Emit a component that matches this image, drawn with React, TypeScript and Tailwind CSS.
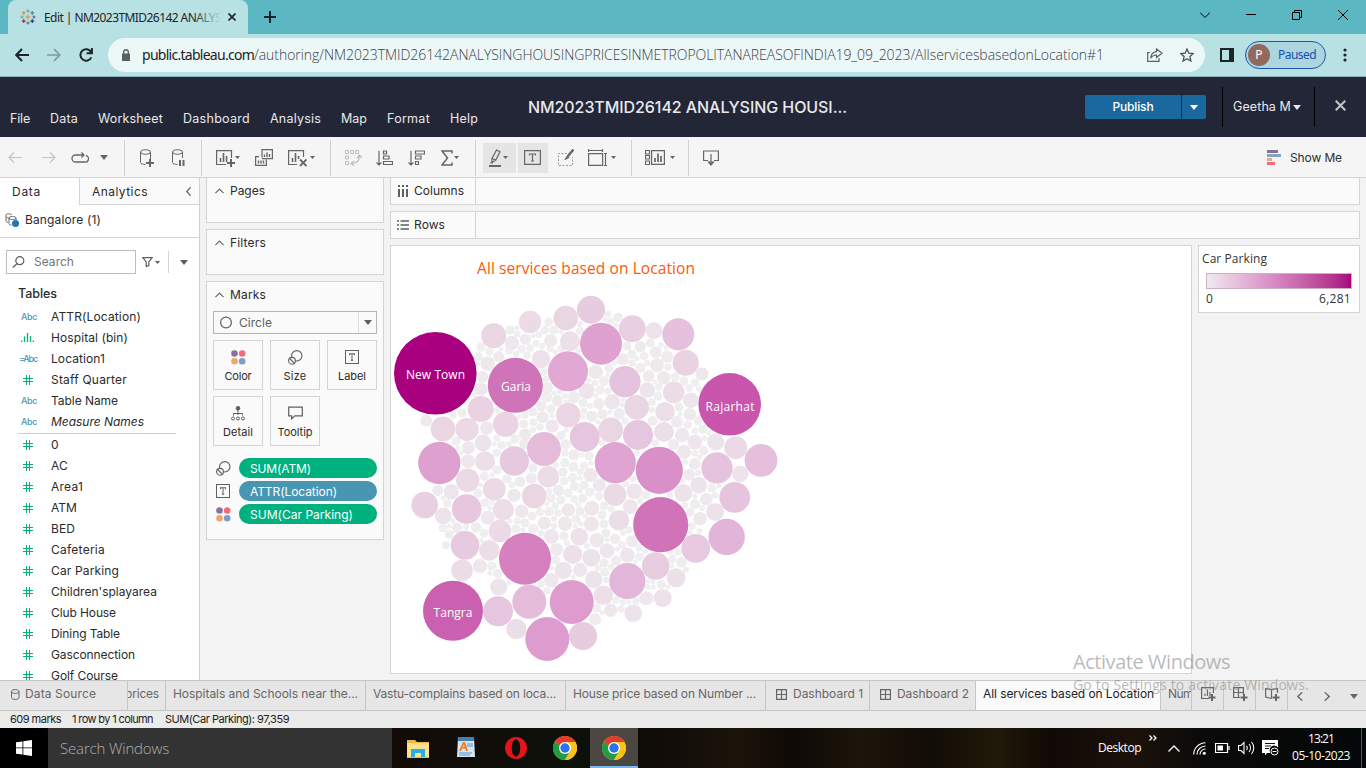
import { useLayoutEffect, useRef, useState } from "react";
import type { ReactNode } from "react";

/* Text whose letter spacing is adjusted so that it spans the given width. */
function Fit({ w, children, className = "" }: { w: number; children: string; className?: string }) {
  const ref = useRef<HTMLSpanElement>(null);
  const [spacing, setSpacing] = useState(0);
  useLayoutEffect(() => {
    if (!ref.current) return;
    const natural = ref.current.getBoundingClientRect().width;
    setSpacing((w - natural) / children.length);
  }, [w, children]);
  return (
    <span ref={ref} className={`inline-block shrink-0 whitespace-pre ${className}`} style={{ letterSpacing: `${spacing}px` }}>
      {children}
    </span>
  );
}

function Icon({ w, h, className = "", sw = 1, children }: { w: number; h: number; className?: string; sw?: number; children: ReactNode }) {
  return (
    <svg width={w} height={h} viewBox={`0 0 ${w} ${h}`} fill="none" stroke="currentColor" strokeWidth={sw} className={`block shrink-0 ${className}`}>
      {children}
    </svg>
  );
}

function Caret({ className = "", big = false }: { className?: string; big?: boolean }) {
  return big ? (
    <Icon w={8} h={5} className={className}><path d="M0 0h8L4 5z" fill="currentColor" stroke="none" /></Icon>
  ) : (
    <Icon w={5} h={3} className={className}><path d="M0 0h5L2.5 3z" fill="currentColor" stroke="none" /></Icon>
  );
}

/* ---------- browser ---------- */

function TableauLogo() {
  const marks: [number, number, number, string][] = [
    [8, 8, 2.6, "#eb8a3c"], [8, 2, 1.6, "#6f9ba8"], [8, 14, 1.6, "#5c6f9e"], [2, 8, 1.5, "#6f9ba8"], [14, 8, 1.5, "#4a5e9a"],
    [3.7, 3.9, 2, "#e8912d"], [12.3, 3.9, 2, "#5b879b"], [3.7, 12.1, 2, "#c72035"], [12.3, 12.1, 2, "#1f457e"],
  ];
  return (
    <Icon w={16} h={16} sw={1.2}>
      {marks.map(([x, y, r, c], i) => <path key={i} stroke={c} d={`M${x - r} ${y}h${2 * r}M${x} ${y - r}v${2 * r}`} />)}
    </Icon>
  );
}

function Browser() {
  return (
    <div className="h-[77px] bg-[#5bb7c1] font-['Noto_Sans',sans-serif] text-[#1d2327]">
      <div className="flex h-[34px] items-stretch">
        <div className="ml-2 flex w-[240px] items-center rounded-t-[8px] bg-[#b8e1e4] pl-3">
          <TableauLogo />
          <div className="relative ml-2 w-[177px] overflow-hidden pb-[2px]">
            <Fit w={177} className="text-[12px]">Edit | NM2023TMID26142 ANALYS</Fit>
            <div className="absolute inset-y-0 right-0 w-7 bg-gradient-to-r from-transparent to-[#b8e1e4]" />
          </div>
          <Icon w={8} h={8} sw={1.6} className="ml-[7px]"><path d="M.5.5l7 7M7.5.5l-7 7" /></Icon>
        </div>
        <Icon w={12} h={12} sw={2} className="ml-4 self-center"><path d="M6 0v12M0 6h12" /></Icon>
        <div className="ml-auto flex items-center pb-[5px] text-black">
          <Icon w={10} h={6} className="mr-9"><path d="M0 .5l5 5 5-5" /></Icon>
          <Icon w={10} h={1} className="mr-9"><path d="M0 .5h10" /></Icon>
          <Icon w={10} h={10} className="mr-9"><path d="M.5 2.5h7v7h-7zM2.5 2.5v-2h7v7h-2" /></Icon>
          <Icon w={10} h={10} className="mr-[18px]"><path d="M0 0l10 10M10 0L0 10" /></Icon>
        </div>
      </div>
      <div className="flex h-[43px] items-center border-b border-[#8fb8bd] bg-[#b8e1e4] pb-[1px]">
        <Icon w={14} h={14} sw={2} className="ml-[15px]"><path d="M14 7H1.5M7 1L1.200 7 7 13" /></Icon>
        <Icon w={14} h={14} sw={1.700} className="ml-[18px] text-[#7d9a9e]"><path d="M0 7h12.500M7 1l5.800 6L7 13" /></Icon>
        <Icon w={14} h={14} sw={2} className="ml-[18px]"><path d="M12.300 9.300A5.700 5.700 0 1 1 12 4M12.900 0v5.300H7.600" /></Icon>
        <div className="ml-[15px] flex h-[34px] w-[1097px] items-center rounded-full bg-[#ecf8f8]">
          <Icon w={8} h={12} sw={1.400} className="ml-[14px] text-[#5a5f63]"><path d="M0 4.500h8V12H0z" fill="currentColor" stroke="none" /><path d="M1.700 5V3a2.300 2.300 0 0 1 4.600 0v2" /></Icon>
          <Fit w={112} className="ml-[12px] text-[14px]">public.tableau.com</Fit>
          <Fit w={850} className="font-['Open_Sans',sans-serif] text-[14px] font-light text-[#3c4246]">/authoring/NM2023TMID26142ANALYSINGHOUSINGPRICESINMETROPOLITANAREASOFINDIA19_09_2023/AllservicesbasedonLocation#1</Fit>
          <Icon w={16} h={14} sw={1.200} className="ml-[43px] text-[#5a5f63]"><path d="M3 4.500H.700V13.300H12V10M9.500 1l5.500 4.300-5.500 4.200V7C6.500 7 5 8 3.600 10.300 4 6.500 6 4 9.500 3.700z" /></Icon>
          <Icon w={14} h={14} sw={1.300} className="ml-[17px] text-[#4a5054]"><path d="M7 1l1.800 4.200 4.500.4-3.400 3 1 4.400L7 10.700 3.100 13l1-4.400-3.400-3 4.500-.4z" /></Icon>
        </div>
        <Icon w={14} h={14} className="ml-[15px]"><path d="M0 0h14v14H0zM2 2v10h7V2z" fill="currentColor" fillRule="evenodd" stroke="none" /></Icon>
        <div className="ml-[11px] flex h-7 w-[81px] items-center rounded-full border border-[#1f55ad] bg-[#abd6e0] pl-[2px] text-[#1650ab]">
          <span className="flex h-[22px] w-[22px] items-center justify-center rounded-full bg-[#91695d] text-[12px] text-white">P</span>
          <Fit w={38} className="ml-2 text-[12px]">Paused</Fit>
        </div>
        <Icon w={4} h={14} className="ml-[17px]"><g fill="currentColor" stroke="none"><circle cx="2" cy="2" r="1.600" /><circle cx="2" cy="7" r="1.600" /><circle cx="2" cy="12" r="1.600" /></g></Icon>
      </div>
    </div>
  );
}

/* ---------- application header ---------- */

function Header() {
  return (
    <div className="flex h-[60px] bg-[#232636] text-[#e9e9ec]">
      <div className="flex w-[528px] items-start pl-[10px] pt-[33px] text-[12.5px] leading-[18px]">
        <Fit w={20}>File</Fit>
        <Fit w={28} className="ml-5">Data</Fit>
        <Fit w={65} className="ml-5">Worksheet</Fit>
        <Fit w={67} className="ml-5">Dashboard</Fit>
        <Fit w={51} className="ml-5">Analysis</Fit>
        <Fit w={26} className="ml-5">Map</Fit>
        <Fit w={43} className="ml-5">Format</Fit>
        <Fit w={28} className="ml-5">Help</Fit>
      </div>
      <Fit w={319} className="pt-[19px] text-[16px] font-medium leading-[22px]">NM2023TMID26142 ANALYSING HOUSI...</Fit>
      <div className="ml-auto flex">
        <div className="mt-[18px] flex h-6 text-white">
          <div className="flex w-24 items-center justify-center rounded-l-[2px] bg-[#1a699e] text-[12px] font-medium"><Fit w={41}>Publish</Fit></div>
          <div className="ml-px flex w-6 items-center justify-center rounded-r-[2px] bg-[#1a699e]"><Caret big /></div>
        </div>
        <div className="ml-4 mt-[10px] flex h-10 w-[93px] items-center border-x border-black pl-[10px] text-[12.5px]">
          <Fit w={58} className="pt-px">Geetha M</Fit>
          <Caret big className="ml-[2px]" />
        </div>
        <Icon w={11} h={11} sw={2} className="ml-5 mr-5 mt-[23px] text-[#c3c4c9]"><path d="M.7.7l9.600 9.600M10.300.7L.7 10.300" /></Icon>
      </div>
    </div>
  );
}

/* ---------- toolbar ---------- */

function Sep({ className }: { className: string }) {
  return <div className={`h-9 w-px shrink-0 bg-[#d0d0d0] ${className}`} />;
}

function LabelIcon({ w = 17, h = 15, className = "" }: { w?: number; h?: number; className?: string }) {
  return (
    <svg width={w} height={h} viewBox="0 0 17 15" preserveAspectRatio="none" fill="none" stroke="currentColor" className={`block shrink-0 ${className}`}>
      <path d="M.6.6h15.800v13.800H.6zM5.500 5.500V4h6v1.500M8.500 4v7M7 11h3" strokeWidth="1.200" />
    </svg>
  );
}

function Toolbar() {
  return (
    <div className="flex h-[41px] items-center border-b border-[#d4d4d4] bg-[#f5f5f5] pt-px text-[#666]">
      <Icon w={14} h={11} sw={1.200} className="ml-2 text-[#c2c2c2]"><path d="M14 5.500H1M6 .5l-5 5 5 5" /></Icon>
      <Icon w={14} h={11} sw={1.200} className="ml-[20px] text-[#c2c2c2]"><path d="M0 5.500h13M8 .5l5 5-5 5" /></Icon>
      <Icon w={18} h={12} sw={1.300} className="ml-[15px]"><path d="M13 3H4.500a3.300 3.300 0 0 0 0 7h9a3.300 3.300 0 0 0 1.500-6.500M10.500.5L13 3l-2.500 2.500" /></Icon>
      <Caret big className="ml-[11px]" />
      <Sep className="ml-4" />
      <Icon w={14} h={18} className="ml-[15px]"><path d="M.5 3v10.500c0 1.300 3 2 5 2M10.500 3v7M.5 3C.5 0 10.500 0 10.500 3S.5 6 .5 3" /><path d="M10 10v8M6 14h8" strokeWidth="2" /></Icon>
      <Icon w={14} h={18} className="ml-[18px]"><path d="M.5 3v10.500c0 1.300 3 2 5 2M10.500 3v6M.5 3C.5 0 10.500 0 10.500 3S.5 6 .5 3" /><path d="M8 11v6M11.500 11v6" strokeWidth="2" /></Icon>
      <Sep className="ml-[15px]" />
      <Icon w={19} h={18} className="ml-[14px]"><path d="M10 15.500H.6V1.600h14.900V9" strokeWidth="1.200" /><path d="M4.500 9v4M7.500 4v9M10.500 7v6" strokeWidth="1.600" /><path d="M15 10v8M11 14h8" strokeWidth="2" /></Icon>
      <Caret className="ml-0" />
      <Icon w={18} h={17} className="ml-[15px]"><path d="M7 8.500V.6h10.400v9H14M4 7.600H.6v8.800h10.800V10.500M7 9.600h7" strokeWidth="1.200" /><path d="M9.500 8V5.500M12 8V3.500M14.500 8V5M3.500 14.500v-3M6 14.500v-3M8.500 14.500v-3" strokeWidth="1.400" /></Icon>
      <Icon w={19} h={18} className="ml-[15px]"><path d="M9 15.500H.6V1.600h14.900V8" strokeWidth="1.200" /><path d="M4.500 9v4M7.500 4v9M10.500 7v3" strokeWidth="1.600" /><path d="M12 10.500l6.500 6.500M18.500 10.500L12 17" strokeWidth="1.800" /></Icon>
      <Caret className="ml-[3px]" />
      <Sep className="ml-[15px]" />
      <Icon w={17} h={17} className="ml-[14px] text-[#bdbdbd]"><path d="M.5 1.500h3v3h-3zM5.500 1.500h3v3h-3zM10.500 1.500h3v3h-3zM.5 7h3v3h-3zM.5 12.500h3v3h-3z" /><path d="M6.500 14.500c5 0 8-2.500 8-8M12 9l2.500-3L17 9M9 12l-3 2.500L9 17" strokeWidth="1.200" /></Icon>
      <Icon w={17} h={16} className="ml-[14px]"><path d="M3 1v14M.5 12.500L3 15l2.500-2.500M7.500 1h3v3h-3zM7.500 6h5.500v3H7.500zM7.500 11.500h9v3h-9z" strokeWidth="1.200" /></Icon>
      <Icon w={17} h={16} className="ml-[15px]"><path d="M3 1v14M.5 12.500L3 15l2.500-2.500M7.500 1h9v3h-9zM7.500 6h5.500v3H7.500zM7.500 11.500h3v3h-3z" strokeWidth="1.200" /></Icon>
      <Icon w={12} h={16} sw={1.500} className="ml-4"><path d="M11 3.500V1H1l5.500 7L1 15h10v-2.500" /></Icon>
      <Caret className="ml-[1px]" />
      <Sep className="ml-4" />
      <div className="ml-[7px] flex h-[30px] w-[33px] shrink-0 items-center bg-[#e5e5e5] pl-[6px]">
        <Icon w={13} h={18}><path d="M3 9.500L7.500 1l3.500 1.800L6.800 11 3 13.500zM3 9.500L6.800 11M1 14h3" strokeWidth="1.200" /><path d="M0 17h12" strokeWidth="2" /></Icon>
        <Caret className="ml-[1px]" />
      </div>
      <div className="ml-[2px] flex h-[30px] w-[30px] shrink-0 items-center bg-[#e5e5e5] pl-[6px]"><LabelIcon /></div>
      <Icon w={16} h={17} className="ml-[10px]"><path d="M9 4.500H.5v12h14V8" strokeDasharray="2 1.500" stroke="#9a9a9a" /><path d="M15.500.5L10 7" strokeWidth="2.500" /><path d="M9.500 6.500L7 10.500l4-2z" fill="currentColor" /></Icon>
      <Icon w={19} h={17} className="ml-[14px]"><path d="M.6 4.600h14v11.800H.6zM.5 1.500h14M.5 0v3M14.500 0v3M17.500 4.500v12M16 4.500h3M16 16.500h3" strokeWidth="1.200" /></Icon>
      <Caret className="ml-1" />
      <Sep className="ml-[15px]" />
      <Icon w={20} h={15} className="ml-[13px]"><path d="M.5.5h4v3.500h-4zM.5 5.500h4v3.500h-4zM.5 11h4v3.500h-4zM6.600.6h12.800v13.800H6.600z" strokeWidth="1.200" /><path d="M10 12V8M13 12V3.500M16 12V6" strokeWidth="1.700" /></Icon>
      <Caret className="ml-[5px]" />
      <Sep className="ml-[13px]" />
      <Icon w={16} h={16} className="ml-[14px]"><path d="M5 10.500H.6V1h14.800v9.500H11M8 4v10M5.500 12L8 15l2.500-3z" strokeWidth="1.200" /></Icon>
      <div className="ml-auto mr-6 flex items-center text-[12px] text-[#2d2d2d]">
        <Icon w={14} h={15}><g stroke="none"><path d="M0 0h11v3H0z" fill="#89719b" /><path d="M0 4h14v3H0z" fill="#7fa4cd" /><path d="M0 8h5v3H0z" fill="#f5a480" /><path d="M0 12h8v3H0z" fill="#f7697c" /></g></Icon>
        <Fit w={52} className="ml-[9px]">Show Me</Fit>
      </div>
    </div>
  );
}

/* ---------- data pane ---------- */

type Kind = "abc" | "eqabc" | "num" | "bin";
const dimensions: [Kind, string, number][] = [
  ["abc", "ATTR(Location)", 90], ["bin", "Hospital (bin)", 77], ["eqabc", "Location1", 54], ["num", "Staff Quarter", 76], ["abc", "Table Name", 67], ["abc", "Measure Names", 93],
];
const measures: [Kind, string, number][] = [
  ["num", "0", 8], ["num", "AC", 17], ["num", "Area1", 32], ["num", "ATM", 26], ["num", "BED", 24], ["num", "Cafeteria", 54], ["num", "Car Parking", 68],
  ["num", "Children'splayarea", 106], ["num", "Club House", 65], ["num", "Dining Table", 69], ["num", "Gasconnection", 84], ["num", "Golf Course", 67],
];

function Field({ kind, name, w }: { kind: Kind; name: string; w: number }) {
  return (
    <div className="flex h-[21px] shrink-0 items-center">
      <div className="flex w-[51px] items-center pl-[19px]">
        {kind === "abc" && <Fit w={16} className="ml-[2px] text-[9px] font-medium text-[#4996b2]">Abc</Fit>}
        {kind === "eqabc" && <Fit w={18} className="text-[9px] font-medium text-[#4996b2]">=Abc</Fit>}
        {kind === "bin" && <Icon w={13} h={9} sw={1.300} className="ml-[2px] text-[#00b180]"><path d="M.7 9V7.500M3.500 9V3.500M6.500 9V0M9.500 9V3M12.300 9V7.500" /></Icon>}
        {kind === "num" && <Icon w={10} h={10} sw={1} className="ml-1 text-[#00b180]"><path d="M3.500 0v10M6.500 0v10M0 3.500h10M0 6.500h10" /></Icon>}
      </div>
      <Fit w={w} className={name === "Measure Names" ? "italic" : ""}>{name}</Fit>
    </div>
  );
}

function DataPane() {
  return (
    <div className="flex w-[200px] shrink-0 flex-col overflow-hidden border-r border-[#d0d0d0] bg-white text-[12px] text-[#2b2b2b]">
      <div className="flex h-[27px] shrink-0">
        <div className="flex w-[79px] items-center pl-3"><Fit w={29}>Data</Fit></div>
        <div className="flex flex-1 items-center border-b border-l border-[#d4d4d4] bg-[#fafafa] pl-3">
          <Fit w={56} className="pt-px">Analytics</Fit>
          <Icon w={5} h={9} sw={1.200} className="ml-auto mr-2 text-[#5f5f5f]"><path d="M4.500.3L.8 4.500l3.700 4.200" /></Icon>
        </div>
      </div>
      <div className="flex h-[33px] shrink-0 items-center border-b border-[#d4d4d4] pb-[2px] pl-[5px]">
        <Icon w={14} h={14} className="text-[#666]"><path d="M1 8V2c0-1.500 5-1.500 6 0M1 8c0 .8 1 1.200 2 1.400M1.500 4c1 1 2 1 2.500 1M4 5c0-2 7-2 7 0s-7 2-7 0M4 5v5.500c0 .8 1 1.500 2.500 1.600M11 5v3" /><circle cx="10.500" cy="10.500" r="3.500" fill="#1f77b4" stroke="none" /></Icon>
        <Fit w={76} className="ml-[6px]">Bangalore (1)</Fit>
      </div>
      <div className="mt-3 flex h-6 shrink-0 items-center pl-[6px] text-[#5f5f5f]">
        <div className="flex h-6 w-[130px] items-center border border-[#bdbdbd] pl-[5px]">
          <Icon w={13} h={12} sw={1.200}><circle cx="7.800" cy="4.700" r="4" /><path d="M5 7.700L.7 11.500" /></Icon>
          <Fit w={40} className="ml-[9px] text-[#757575]">Search</Fit>
        </div>
        <Icon w={11} h={10} sw={1.200} className="ml-[6px]"><path d="M.8.6h9.400L6.800 5v3.500l-2.600 1V5z" /></Icon>
        <Caret className="ml-[2px]" />
        <div className="ml-[8px] h-[22px] w-px bg-[#d4d4d4]" />
        <Caret big className="ml-[11px]" />
      </div>
      <div className="flex h-[32px] shrink-0 items-end pb-[3px] pl-[18px]"><Fit w={39} className="text-[12.5px] font-medium leading-[18px]">Tables</Fit></div>
      {dimensions.map(([k, n, w]) => <Field key={n} kind={k} name={n} w={w} />)}
      <div className="ml-[18px] mt-px h-px w-[158px] shrink-0 bg-[#d0d0d0]" />
      {measures.map(([k, n, w]) => <Field key={n} kind={k} name={n} w={w} />)}
    </div>
  );
}

/* ---------- cards ---------- */

function CardTitle({ w, children }: { w: number; children: string }) {
  return (
    <div className="flex h-[25px] items-center pl-[8px]">
      <Icon w={9} h={6} sw={1.200} className="text-[#6a6a6a]"><path d="M.4 5.200L4.500 1l4.100 4.200" /></Icon>
      <Fit w={w} className="ml-[6px]">{children}</Fit>
    </div>
  );
}

function ColorDots() {
  return (
    <Icon w={15} h={15}><g stroke="none"><circle cx="3.500" cy="3.500" r="3.300" fill="#89719b" /><circle cx="11.200" cy="3.500" r="3.300" fill="#f7697c" /><circle cx="3.500" cy="11.200" r="3.300" fill="#f5a26f" /><circle cx="11.200" cy="11.200" r="3.300" fill="#7a9fca" /></g></Icon>
  );
}
function SizeIcon() {
  return <Icon w={15} h={15} sw={1.100}><circle cx="8.800" cy="5.800" r="5.200" /><circle cx="4" cy="10.800" r="3.400" fill="#fafafa" /><path d="M1.700 8.500l4.600 4.600" /></Icon>;
}

function MarkButton({ label, w, children }: { label: string; w: number; children: ReactNode }) {
  return (
    <div className="flex h-[50px] w-[50px] flex-col items-center border border-[#d4d4d4] bg-[#fafafa] pt-[8px] text-[11px]">
      <div className="flex h-4 items-center text-[#5f5f5f]">{children}</div>
      <Fit w={w} className="mt-[3px] leading-4">{label}</Fit>
    </div>
  );
}

function Pill({ w, children, icon, dimension = false }: { w: number; children: string; icon: ReactNode; dimension?: boolean }) {
  return (
    <div className="flex h-[20px] items-center">
      <div className="-ml-px w-[23px] text-[#5f5f5f]">{icon}</div>
      <div className={`flex h-[20px] w-[138px] items-center rounded-full pl-[11px] pt-px text-white ${dimension ? "bg-[#4996b2]" : "bg-[#00b180]"}`}><Fit w={w}>{children}</Fit></div>
    </div>
  );
}

function Cards() {
  return (
    <div className="ml-[6px] flex w-[178px] shrink-0 flex-col gap-[6px] text-[12px] text-[#2b2b2b]">
      <div className="-mt-px h-[46px] border border-[#d4d4d4] bg-[#fafafa]"><CardTitle w={35}>Pages</CardTitle></div>
      <div className="h-[46px] border border-[#d4d4d4] bg-[#fafafa]"><CardTitle w={36}>Filters</CardTitle></div>
      <div className="h-[259px] border border-[#d4d4d4] bg-[#fafafa]">
        <CardTitle w={36}>Marks</CardTitle>
        <div className="ml-[6px] mt-[4px] flex h-[23px] w-[164px] items-center border border-[#b5b5b5] pl-[6px] text-[#5f5f5f]">
          <Icon w={13} h={13} sw={1.200}><circle cx="6" cy="6.500" r="5.400" /></Icon>
          <Fit w={33} className="ml-[6px]">Circle</Fit>
          <div className="ml-auto flex h-full w-[18px] items-center justify-center border-l border-[#dcdcdc]"><Caret big /></div>
        </div>
        <div className="ml-[6px] mt-[6px] grid w-[164px] grid-cols-3 gap-x-[7px] gap-y-[6px]">
          <MarkButton label="Color" w={27}><ColorDots /></MarkButton>
          <MarkButton label="Size" w={23}><SizeIcon /></MarkButton>
          <MarkButton label="Label" w={28}><LabelIcon w={14} h={14} /></MarkButton>
          <MarkButton label="Detail" w={30}>
            <Icon w={14} h={15}><circle cx="7" cy="2.200" r="2.200" fill="currentColor" stroke="none" /><path d="M7 3v6M2.500 9.500V7.500h9v2" /><circle cx="2" cy="12.500" r="1.500" /><circle cx="7" cy="12.500" r="1.500" /><circle cx="12" cy="12.500" r="1.500" /></Icon>
          </MarkButton>
          <MarkButton label="Tooltip" w={35}>
            <Icon w={15} h={14} sw={1.200}><path d="M.7 1.200h13.600v8.600H6.800L3.600 12.800V9.800H.7z" /></Icon>
          </MarkButton>
        </div>
        <div className="ml-[10px] mt-3 flex flex-col gap-[3px]">
          <Pill w={61} icon={<SizeIcon />}>SUM(ATM)</Pill>
          <Pill w={87} dimension icon={<LabelIcon w={14} h={14} />}>ATTR(Location)</Pill>
          <Pill w={103} icon={<ColorDots />}>SUM(Car Parking)</Pill>
        </div>
      </div>
    </div>
  );
}

/* ---------- bubble chart ---------- */

type Bubble = [number, number, number];
const bubbles: Bubble[] = [
  [435.3, 373.3, 41.3], [515.3, 385.3, 27.5], [493.7, 335.7, 12.5], [530, 322, 11.2], [565.7, 318, 12.3], [591, 309.7, 14], [568, 371.3, 20], [601, 343.7, 21],
  [570, 341.3, 10], [550.7, 340.7, 6.5], [541, 359, 9.2], [525.3, 339.3, 5.6], [512, 343, 7.2], [548.7, 322, 4.4], [487.7, 363.7, 7.3], [498.7, 356.7, 5.6],
  [489.3, 351.7, 4.2], [478.3, 356.7, 4.6], [482.3, 376.7, 6], [481, 389, 6.6], [480.7, 409, 13], [505.7, 424.3, 12.7], [443, 429, 12.4], [467, 429.3, 11.6],
  [426.3, 420.7, 6], [486.7, 428, 6.7], [483, 443, 8.4], [468.3, 447.7, 6.6], [544, 449, 17], [568.3, 415, 12.3], [584.7, 437, 15], [439.3, 463, 21.2],
  [574, 397, 6], [586.7, 391, 8], [547.3, 387.7, 5.6], [546.7, 397, 5.5], [557.3, 400.7, 5.6], [541.3, 406, 5.2], [542.7, 417.3, 6], [552.3, 426, 6.6],
  [523.7, 424, 4.6], [525, 434.7, 6.2], [565.7, 444.3, 5], [574, 455, 5.5], [517.3, 334, 3.5], [521.7, 349, 4.3], [509, 350.3, 4.2], [536, 343.3, 3.4],
  [538.7, 334.7, 3.4], [580, 331, 4], [561.3, 348.7, 4], [550, 349, 3.3], [561, 435.3, 4.6], [524.3, 444, 5.2], [501.7, 445, 4.3], [496.7, 438.3, 3.6],
  [496.7, 452.7, 4.3], [533.3, 422.3, 4], [560, 391.3, 3.4], [566.7, 402.7, 3.2], [632.3, 328.7, 13.5], [678.3, 334.3, 16], [654, 330.7, 8.4], [685.7, 362.7, 13],
  [702, 374, 6.6], [729.7, 404.3, 31.3], [618, 317.3, 4.6], [610.7, 321, 3.4], [640.3, 346.7, 5.6], [650.3, 343, 4.6], [661, 345, 2.8], [655.7, 352.3, 6],
  [667, 356.7, 6], [657, 365.3, 7], [622.7, 359.3, 6], [625, 381.7, 15.6], [640.3, 367.7, 5], [595.7, 372, 7.2], [603.7, 381.3, 5], [648.7, 376, 6],
  [663.7, 377.7, 6.7], [673.7, 392.3, 10.8], [647.3, 390, 7.8], [695, 382.7, 4.3], [690.7, 400.3, 7.8], [636.7, 407.3, 12.4], [665, 411.7, 9.8], [612.3, 401.7, 7.7],
  [599, 403.7, 5.7], [619.3, 413.7, 5.6], [602.3, 414.3, 5.2], [610.7, 430, 12.4], [638, 435, 15], [652.7, 421, 5], [664, 432, 10], [689.7, 414.3, 6.2],
  [677, 422, 6], [687.7, 424.7, 4.3], [682, 435, 7.2], [694.7, 442, 7.4], [673.7, 444.3, 5.6], [684, 452, 7], [703.7, 450.7, 4.7], [704.7, 438.3, 3],
  [695, 430.7, 3.3], [715.7, 442, 8.5], [735.7, 447.7, 11.5], [761, 460.3, 16.4], [591.7, 416.3, 5.6],
  [514.3, 461, 14.7], [485, 461.3, 10], [468, 461.3, 7], [467.7, 480.3, 11.7], [437.7, 490.3, 5.6], [451.3, 491.7, 7.7], [424.7, 505, 13.3], [466.7, 509, 14.8],
  [443.3, 516, 8.4], [494.3, 489.3, 11.4], [514, 495.3, 6.8], [534.3, 496, 12.3], [548.3, 476.7, 10.8], [531.3, 478.3, 5.6], [520, 481.7, 5.4], [484.3, 476.3, 4.7],
  [503.3, 509.7, 10.6], [521.7, 511.3, 6.8], [487.7, 517.7, 7], [500, 531, 11.2], [465, 545.3, 14.3], [457, 527.7, 5.2], [476, 527.3, 5.2], [449.3, 534.3, 4.6],
  [442.7, 528.3, 4], [446, 545, 4], [447.3, 503.3, 4.4], [485, 502.7, 4.5], [489.3, 550.3, 10.4], [480, 566, 7.2], [491.7, 566, 4.6], [497.7, 573.7, 4.7],
  [462, 570.3, 10.8], [525, 558.7, 26], [498.7, 587, 8.6], [453, 610.7, 30], [498, 611.3, 15], [529.3, 601.7, 17], [516.3, 629, 10.2], [547.3, 639, 22],
  [571.7, 602, 22], [583, 636, 14], [551.3, 580.3, 7.2], [563.3, 570.3, 8.6], [580, 570, 7.2], [572.7, 554.3, 9.6], [591.3, 557.7, 9], [556.7, 549.3, 6.4],
  [555.7, 560, 4.7], [551.3, 536.3, 7.4], [533.3, 528.7, 5], [544.3, 523, 6.6], [565, 523.7, 7.2], [579.3, 536.7, 9], [549, 511.7, 4.6], [568.3, 510, 6.8],
  [558.3, 490.3, 5.6], [551, 498.3, 4.5], [591.7, 508.3, 7.5], [591.3, 524, 7.6], [573.3, 467, 5], [564.7, 462.7, 4.6], [572.7, 477.7, 4.6], [574.3, 486.3, 4.6],
  [582.7, 498.3, 4.6], [584.3, 465.7, 4.3], [590.3, 475, 7], [517.3, 521, 3.4],
  [615.3, 462.7, 20.6], [659.3, 470.3, 23.6], [660.7, 524.7, 27.6], [717, 468, 15.7], [740.3, 474, 8.2], [734.7, 497.3, 15.4], [726.7, 537, 18.2], [695.7, 548.3, 14.4],
  [655.7, 566, 13.8], [627.3, 581, 18.1], [676, 577.7, 9.5], [662.7, 598, 9], [646.3, 598.3, 7], [633.3, 613.3, 8.8], [610.7, 610.3, 6.7], [595, 619.3, 6],
  [603.3, 595.3, 9.8], [593.7, 579.3, 8.7], [596.7, 540.3, 7.2], [607, 550.7, 7.4], [615, 494.7, 11.3], [634.3, 491.3, 7.8], [630.3, 506.7, 7.4], [619, 520.3, 10.3],
  [599.3, 485, 6.6], [683.3, 493, 9], [698.7, 485.3, 8.4], [689, 474.7, 6], [694.7, 464, 6], [706.3, 499.3, 6.3], [715, 512, 9], [700, 518.7, 6.7],
  [695, 504, 5], [690, 512.3, 4.6], [681.7, 562.3, 5.4], [672.3, 559, 4.4], [686, 569.7, 3], [627.3, 555, 7.4], [639.3, 556.7, 4.3], [616, 560.7, 5],
  [632, 541.3, 6], [615, 538.7, 5.3], [606, 533, 4.6], [661.3, 584.3, 4.6], [647.3, 587, 3], [653, 587, 2.6], [621.3, 608.7, 3.8], [596.7, 608.3, 4.5],
  [670, 551, 3.6], [715, 495.3, 3.4], [699.3, 531, 2.7],
];

const outline: [number, number][] = [
  [476, 352], [493, 335], [530, 324], [548, 319], [591, 310], [618, 316], [632, 320], [655, 326], [668, 345], [686, 362], [699, 376], [700, 410], [712, 440], [735, 450],
  [716, 470], [722, 490], [712, 512], [697, 533], [690, 548], [684, 570], [665, 594], [633, 610], [597, 618], [571, 602], [530, 590], [500, 580], [480, 566],
  [462, 560], [448, 545], [442, 528], [443, 490], [456, 480], [455, 440], [430, 425], [440, 418], [466, 412], [472, 400],
];

function inside(x: number, y: number) {
  let hit = false;
  for (let i = 0, j = outline.length - 1; i < outline.length; j = i++) {
    const [xi, yi] = outline[i];
    const [xj, yj] = outline[j];
    if (yi > y !== yj > y && x < ((xj - xi) * (y - yi)) / (yj - yi) + xi) hit = !hit;
  }
  return hit;
}

/* The smallest locations are packed into the gaps between the larger ones. */
function packSmall(): Bubble[] {
  const placed: Bubble[] = [...bubbles];
  const result: Bubble[] = [];
  const room = (x: number, y: number) => {
    let r = 99;
    for (const [cx, cy, cr] of placed) r = Math.min(r, Math.hypot(cx - x, cy - y) - cr);
    return r;
  };
  for (const size of [4.4, 3.6, 3, 2.4]) {
    for (let y = 310; y < 625; y += 1) {
      for (let x = 420; x < 740; x += 1) {
        if (!inside(x, y)) continue;
        const r = room(x, y);
        if (r >= size) {
          const b: Bubble = [x, y, Math.min(r, size + 0.2)];
          placed.push(b);
          result.push(b);
        }
      }
    }
  }
  return result;
}
const drawn = [...packSmall(), ...bubbles].sort((a, b) => a[2] - b[2]);

const ramp: [number, number, number, number][] = [
  [4, 240, 239, 240], [6, 238, 234, 237], [9, 237, 226, 234], [12, 235, 216, 228], [13.5, 232, 207, 225], [15, 230, 198, 223], [17, 228, 188, 218],
  [18.2, 226, 181, 216], [20, 224, 168, 211], [22, 221, 156, 205], [23.6, 217, 143, 200], [26, 213, 128, 191], [27.6, 208, 115, 185], [30, 203, 96, 176],
  [31.3, 201, 85, 173], [41.3, 168, 0, 127],
];
function colorFor(r: number) {
  if (r <= ramp[0][0]) return "rgb(240,239,240)";
  for (let i = 1; i < ramp.length; i++) {
    if (r <= ramp[i][0]) {
      const a = ramp[i - 1];
      const b = ramp[i];
      const t = (r - a[0]) / (b[0] - a[0]);
      return `rgb(${[1, 2, 3].map((k) => Math.round(a[k] + (b[k] - a[k]) * t)).join(",")})`;
    }
  }
  return "rgb(168,0,127)";
}

function BubbleChart() {
  const labels: [string, number, number, number][] = [["New Town", 435.500, 379, 59], ["Garia", 516, 391, 30], ["Rajarhat", 730, 411, 49], ["Tangra", 453, 617, 39]];
  return (
    <svg width={400} height={390} viewBox="391 284 400 390" className="block">
      {drawn.map(([x, y, r], i) => <circle key={i} cx={x} cy={y} r={r} fill={colorFor(r)} />)}
      {labels.map(([t, x, y, w]) => (
        <text key={t} x={x} y={y} textAnchor="middle" textLength={w} fill="#fff" className="font-['Open_Sans',sans-serif] text-[12px]">{t}</text>
      ))}
    </svg>
  );
}

function Shelf({ label, w, children }: { label: string; w: number; children: ReactNode }) {
  return (
    <div className="flex h-[28px] shrink-0 border border-[#d4d4d4] bg-[#fafafa] text-[12px] text-[#2b2b2b]">
      <div className="flex w-[85px] items-center border-r border-[#d4d4d4] pl-[6px]">
        {children}
        <Fit w={w} className="ml-[5px]">{label}</Fit>
      </div>
    </div>
  );
}

function Workspace() {
  return (
    <div className="ml-[6px] flex w-[970px] flex-col">
      <div className="-mt-px"><Shelf label="Columns" w={50}><Icon w={12} h={12} sw={2} className="text-[#5f5f5f]"><path d="M2 0v2M6 0v2M10 0v2M2 4v8M6 4v8M10 4v8" /></Icon></Shelf></div>
      <div className="mt-[6px]"><Shelf label="Rows" w={31}><Icon w={12} h={10} sw={1.600} className="text-[#5f5f5f]"><path d="M0 1h2M3.500 1H12M0 5h2M3.500 5H12M0 9h2M3.500 9H12" /></Icon></Shelf></div>
      <div className="mt-[6px] flex items-start gap-[6px]">
        <div className="h-[429px] w-[802px] border border-[#d4d4d4] bg-white">
          <div className="h-[38px] pl-[86px] pt-[11px] font-['Open_Sans',sans-serif] text-[15.5px] font-normal leading-[22px] text-[#fb5a0a]"><Fit w={218}>All services based on Location</Fit></div>
          <BubbleChart />
        </div>
        <div className="h-[68px] w-[162px] border border-[#d4d4d4] bg-white px-[7px] font-['Open_Sans',sans-serif] text-[12px] text-[#333]">
          <div className="-ml-[4px] h-[27px] pt-[5px] leading-4"><Fit w={65}>Car Parking</Fit></div>
          <div className="h-4 border border-[#c9b0c2] bg-gradient-to-r from-[#f1eaf0] via-[#d482c0] to-[#a8007f]" />
          <div className="mt-[2px] flex justify-between pr-px leading-4"><span>0</span><Fit w={32}>6,281</Fit></div>
        </div>
      </div>
    </div>
  );
}

/* ---------- sheet tabs and status ---------- */

function GridIcon() {
  return <Icon w={11} h={11} sw={1.200} className="mr-[6px]"><path d="M.6.6h9.800v9.800H.6zM5.500.6v9.800M.6 5.500h9.800" /></Icon>;
}

function SheetTabs() {
  const tab = "flex shrink-0 items-center overflow-hidden border-r border-[#c6c6c6]";
  return (
    <div className="flex h-[31px] shrink-0 border-y border-[#c6c6c6] bg-[#e6e6e6] pb-[3px] text-[12px] text-[#666]">
      <div className={`${tab} -mb-[3px] w-[128px] pb-[3px] pl-[11px]`}>
        <Icon w={9} h={11} className="mr-[5px]"><path d="M.5 2.500v6c0 2.500 7.500 2.500 7.500 0v-6M.5 2.500C.5 0 8 0 8 2.500S.5 5 .5 2.500" /></Icon>
        <Fit w={71}>Data Source</Fit>
      </div>
      <div className={`${tab} -mb-[3px] w-[38px] justify-end pb-[3px] pr-[6px]`}><Fit w={34}>prices</Fit></div>
      <div className={`${tab} -mb-[3px] w-[200px] pb-[3px] pl-[7px]`}><Fit w={185}>Hospitals and Schools near the...</Fit></div>
      <div className={`${tab} -mb-[3px] w-[200px] pb-[3px] pl-[7px]`}><Fit w={183}>Vastu-complains based on loca...</Fit></div>
      <div className={`${tab} -mb-[3px] w-[200px] pb-[3px] pl-[7px]`}><Fit w={183}>House price based on Number ...</Fit></div>
      <div className={`${tab} -mb-[3px] w-[104px] pb-[3px] pl-[10px]`}><GridIcon /><Fit w={70}>Dashboard 1</Fit></div>
      <div className={`${tab} -mb-[3px] w-[106px] pb-[3px] pl-[10px]`}><GridIcon /><Fit w={72}>Dashboard 2</Fit></div>
      <div className={`${tab} -mb-[3px] w-[185px] bg-[#fafafa] pb-[3px] pl-[7px] text-[#222]`}><Fit w={171}>All services based on Location</Fit></div>
      <div className={`${tab} -mb-[3px] w-[31px] pb-[3px] pl-[7px]`}><Fit w={25}>Num</Fit></div>
      <div className={`${tab} -mb-[3px] w-8 justify-center pb-[3px] pl-[2px]`}><Icon w={15} h={14}><path d="M8 11.500H.6V.6h11.800V6M4 9V6.500M6.500 9V3M9 9V5" strokeWidth="1.200" /><path d="M11 7v7M7.500 10.500h7" strokeWidth="2" /></Icon></div>
      <div className={`${tab} -mb-[3px] w-8 justify-center pb-[3px] pl-[2px]`}><Icon w={15} h={14}><path d="M7 10.500H.6V.6h9.800V7M5.500.6v9.900M.6 5.500h9.800" strokeWidth="1.200" /><path d="M11 7v7M7.500 10.500h7" strokeWidth="2" /></Icon></div>
      <div className={`${tab} -mb-[3px] w-8 justify-center pb-[3px] pl-[2px]`}><Icon w={15} h={14}><path d="M6.500 11.500L.6 10V1.600l4 .6L6.500 3l2-.8 4-.6V6M6.500 3v8.500" strokeWidth="1.200" /><path d="M11 7v7M7.500 10.500h7" strokeWidth="2" /></Icon></div>
      <Icon w={6} h={9} sw={1.300} className="ml-[9px] mt-[11px]"><path d="M5.300.3L.8 4.500l4.500 4.200" /></Icon>
      <Icon w={6} h={9} sw={1.300} className="ml-[21px] mt-[11px]"><path d="M.7.3l4.500 4.200L.7 8.700" /></Icon>
      <Caret big className="ml-5 mt-[13px]" />
    </div>
  );
}

function StatusBar() {
  return (
    <div className="flex h-[17px] shrink-0 items-center bg-[#ebebeb] pl-[10px] text-[11px] text-[#222]">
      <Fit w={51}>609 marks</Fit>
      <Fit w={81} className="ml-[11px]">1 row by 1 column</Fit>
      <Fit w={124} className="ml-[12px]">SUM(Car Parking): 97,359</Fit>
    </div>
  );
}

/* ---------- Windows taskbar ---------- */

function Chrome() {
  return (
    <Icon w={24} h={24}>
      <g stroke="none">
        <circle cx="12" cy="12" r="12" fill="#fbc31a" />
        <path d="M12 12L1.600 6A12 12 0 0 1 22.400 6z" fill="#e33b2e" />
        <path d="M12 12L1.600 6A12 12 0 0 0 12 24l5.200-9z" fill="#249a48" />
        <path d="M12 6h10.400A12 12 0 0 1 12 24l5.200-9z" fill="#fbc31a" />
        <circle cx="12" cy="12" r="6" fill="#fff" />
        <circle cx="12" cy="12" r="4.700" fill="#2b73e8" />
      </g>
    </Icon>
  );
}

function Taskbar() {
  return (
    <div className="flex h-10 shrink-0 items-stretch bg-[linear-gradient(90deg,#080605_0%,#120b07_29%,#0d110a_42%,#0f0b07_48%,#1c140b_54%,#0e0905_58%,#1c150b_63%,#120c07_68%,#201808_73%,#100905_77%,#1c120b_83%,#0a0a09_88%,#040808_100%)] font-['Open_Sans',sans-serif] text-white">
      <div className="flex w-12 items-center justify-center bg-black">
        <Icon w={16} h={16}><path d="M0 2.300l6.500-.9v6.100H0zM7.300 1.300L16 0v7.500H7.300zM0 8.300h6.500v6.200L0 13.700zM7.300 8.300H16V16l-8.700-1.300z" fill="currentColor" stroke="none" /></Icon>
      </div>
      <div className="flex w-[344px] items-center bg-[#333] pl-3 text-[15px] font-light text-[#b0b0b0]"><Fit w={109}>Search Windows</Fit></div>
      <div className="flex items-center pl-[15px]">
        <Icon w={22} h={19}><g stroke="none"><path d="M0 1h8l2 2h12v16H0z" fill="#eeb94a" /><path d="M0 4h22v14H0z" fill="#fde08a" /><path d="M4 10h14v8h-4v-4H8v4H4z" fill="#28aee5" /></g></Icon>
        <Icon w={20} h={22} className="ml-[28px]"><g stroke="none"><path d="M1 0h16l1 20H0z" fill="#d4e6f4" /><path d="M1 0h16v4H1z" fill="#467fae" /><path d="M10 7h6M10 9h6M2 16h13M2 18h11" stroke="#5f94c5" /><path d="M2 14L6 5h2l3 9H9l-.8-2.500H5L4 14zM5.600 10h2L6.800 7.500z" fill="#ef7d20" /></g></Icon>
        <Icon w={22} h={22} className="ml-[28px]"><path d="M11 0c6 0 11 4.700 11 11s-5 11-11 11S0 17.300 0 11 5 0 11 0zM11 2.500c-2.500 0-4.200 3.600-4.200 8.500s1.700 8.500 4.200 8.500 4.200-3.600 4.200-8.500-1.700-8.500-4.200-8.500z" fill="#e4141f" fillRule="evenodd" stroke="none" /></Icon>
        <div className="ml-[26px]"><Chrome /></div>
      </div>
      <div className="ml-[13px] flex w-12 items-center justify-center border-b-2 border-[#76b9ed] bg-[#4c4742] pt-[2px]"><Chrome /></div>
      <div className="ml-auto flex items-center">
        <Fit w={43} className="text-[12px]">Desktop</Fit>
        <Icon w={8} h={6} sw={1.300} className="mb-[21px] ml-2"><path d="M.5.5L3 3 .5 5.500M4.500.5L7 3 4.500 5.500" /></Icon>
        <Icon w={12} h={7} sw={1.300} className="ml-[11px]"><path d="M.5 6.500L6 1l5.500 5.500" /></Icon>
        <Icon w={13} h={13} sw={1.100} className="ml-[13px]"><path d="M.7 12.500A12 12 0 0 1 12.500.7M4 12.500A8.500 8.500 0 0 1 12.500 4M7 12.500A5.500 5.500 0 0 1 12.500 7" /><circle cx="11.300" cy="11.300" r="1.500" fill="currentColor" stroke="none" /></Icon>
        <Icon w={15} h={10} className="ml-[9px]"><path d="M.5.5h12v9H.5zM14 3v4" strokeWidth="1.200" /><path d="M2.500 2.500H8v5H2.500z" fill="currentColor" stroke="none" /></Icon>
        <Icon w={17} h={14} className="ml-2"><path d="M.5 4.500H3L6 1.500v11L3 9.500H.5zM8.500 5c1 1 1 3 0 4M11 3c2 2.300 2 5.700 0 8M13.500 1c3 3.500 3 8.500 0 12" strokeWidth="1.100" /></Icon>
        <Icon w={17} h={16} className="ml-[7px]"><path d="M0 0h16v7.500a4.600 4.600 0 0 0-7.500 5.500H5l-2 2.500V13H0z" fill="currentColor" stroke="none" /><path d="M3 3.500h10M3 6h6M3 8.500h4" stroke="#111" /><circle cx="12.500" cy="11.500" r="3.500" /><path d="M10.500 11.500h4" /></Icon>
        <div className="ml-3 flex w-[60px] flex-col items-center pb-[3px] text-[12px] leading-[17px]"><Fit w={26}>13:21</Fit><Fit w={58}>05-10-2023</Fit></div>
        <div className="ml-[10px] mr-1 h-10 w-px bg-[#555]" />
      </div>
    </div>
  );
}

export default function App() {
  return (
    <div className="relative flex h-[768px] w-[1366px] flex-col overflow-hidden bg-[#f3f3f3] font-['Inter',sans-serif]">
      <Browser />
      <Header />
      <Toolbar />
      <div className="flex h-[502px] shrink-0">
        <DataPane />
        <Cards />
        <Workspace />
      </div>
      <SheetTabs />
      <StatusBar />
      <Taskbar />
      <div className="pointer-events-none absolute left-[1073px] top-[649px] font-['Open_Sans',sans-serif] text-[#8c8c8c]/60">
        <div className="text-[20px] leading-[26px]"><Fit w={157}>Activate Windows</Fit></div>
        <div className="text-[14px] leading-[20px]"><Fit w={236}>Go to Settings to activate Windows.</Fit></div>
      </div>
    </div>
  );
}
